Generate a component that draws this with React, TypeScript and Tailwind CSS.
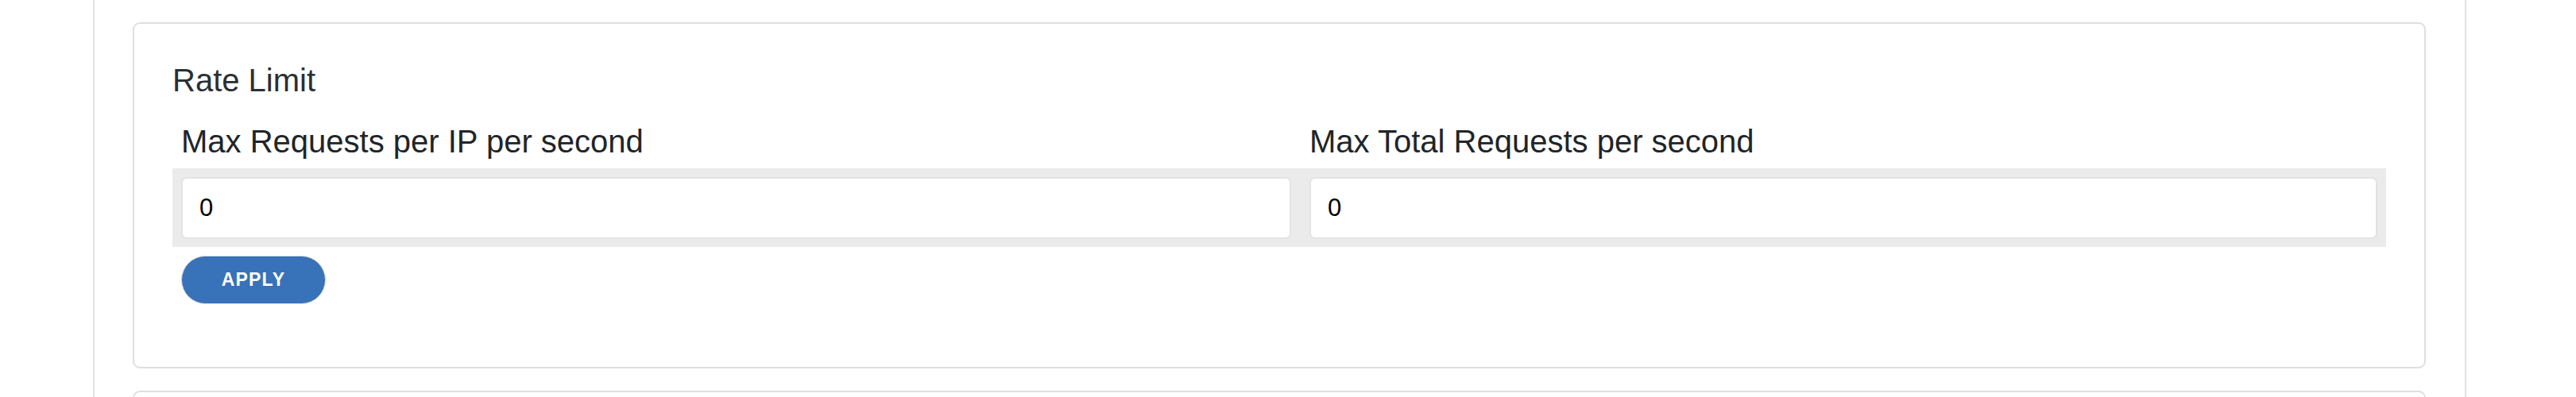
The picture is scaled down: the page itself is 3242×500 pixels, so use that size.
export default function App() {
  return (
    <div className="h-[500px] w-full overflow-hidden bg-white font-['Liberation_Sans',Arial,sans-serif]">
      <div className="ml-[117px] h-full w-[2987px] border-x-2 border-[#e2e2e2] px-[48px] pt-[28px]">
        {/* Rate Limit card */}
        <div className="w-[2886px] rounded-[9px] border-2 border-[#dfdfdf] px-[48px] pt-[47px] pb-[79px]">
          <h2 className="text-[40px] leading-[48px] font-normal text-[#2a2f34]">Rate Limit</h2>

          <div className="mt-[29px] grid grid-cols-[1397px_1344px] gap-x-[23px] px-[11px]">
            <label className="text-[40px] leading-[48px] text-[#212529]">Max Requests per IP per second</label>
            <label className="text-[40px] leading-[48px] text-[#212529]">Max Total Requests per second</label>
          </div>

          <div className="mt-[10px] grid grid-cols-[1397px_1344px] gap-x-[23px] bg-[#ebebeb] px-[11px] pt-[11px] pb-[10px]">
            <input
              type="text"
              defaultValue="0"
              className="h-[78px] rounded-[7px] border-2 border-[#e3e3e3] bg-white pl-[21px] text-[31px] text-black outline-none"
            />
            <input
              type="text"
              defaultValue="0"
              className="h-[78px] rounded-[7px] border-2 border-[#e3e3e3] bg-white pl-[21px] text-[31px] text-black outline-none"
            />
          </div>

          <div className="mt-[11px] pl-[11px]">
            <button className="flex h-[61px] w-[182px] items-center justify-center rounded-full border border-[#dcdcdc] bg-[#3872b8] text-[23px] font-bold tracking-[1.2px] text-white">
              APPLY
            </button>
          </div>
        </div>

        {/* next card */}
        <div className="mt-[28px] h-[60px] w-[2886px] rounded-[9px] border-2 border-[#dfdfdf]"></div>
      </div>
    </div>
  )
}
